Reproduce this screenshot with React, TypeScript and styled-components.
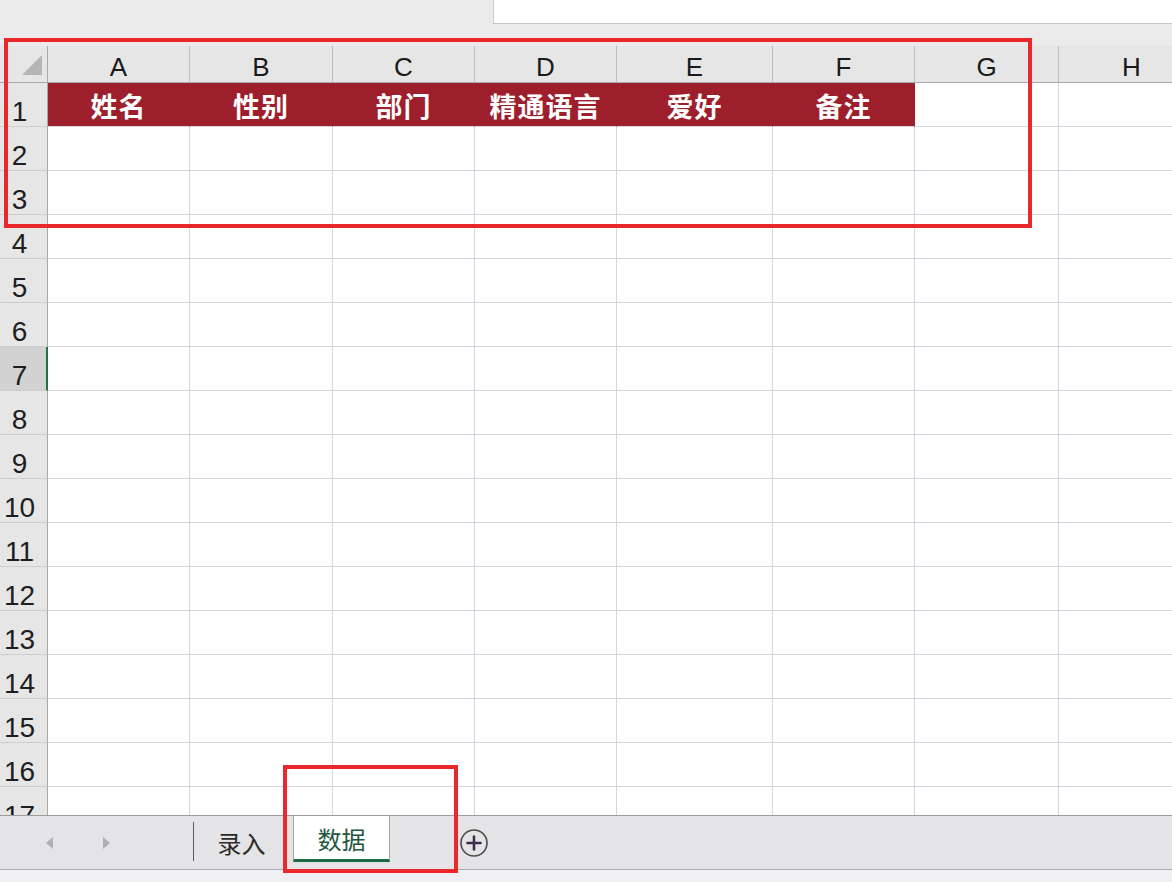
import React from "react";
import styled, { createGlobalStyle } from "styled-components";

const GlobalStyle = createGlobalStyle`
  html, body {
    margin: 0;
    padding: 0;
    background: #ebebeb;
  }
  body {
    font-family: "Liberation Sans", "Noto Sans CJK SC", sans-serif;
  }
`;

const letters = ["A", "B", "C", "D", "E", "F", "G", "H"];
const titles = ["姓名", "性别", "部门", "精通语言", "爱好", "备注"];
const rowCount = 17;
const activeRow = 7;

export default function App() {
  return (
    <>
      <GlobalStyle />
      <Page>
        <TopBar>
          <FormulaBox />
        </TopBar>

        <Sheet>
          <Corner>
            <svg width="20" height="20" viewBox="0 0 20 20">
              <polygon points="20,0 20,20 0,20" fill="#b5b5b5" />
            </svg>
          </Corner>
          {letters.map((l) => (
            <ColHead key={l}>{l}</ColHead>
          ))}

          {Array.from({ length: rowCount }, (_, i) => {
            const r = i + 1;
            return (
              <React.Fragment key={r}>
                <RowHead $active={r === activeRow}>{r}</RowHead>
                {letters.map((l, c) => {
                  const title = r === 1 ? titles[c] : undefined;
                  return (
                    <Cell key={l} $filled={!!title}>
                      {title}
                    </Cell>
                  );
                })}
              </React.Fragment>
            );
          })}
        </Sheet>

        <TabBar>
          <Nav>
            <Arrow viewBox="0 0 8 12">
              <polygon points="7,0 7,12 0,6" />
            </Arrow>
            <Arrow viewBox="0 0 8 12">
              <polygon points="1,0 1,12 8,6" />
            </Arrow>
          </Nav>
          <Divider />
          <Tab>录入</Tab>
          <Tab $active>数据</Tab>
          <AddButton aria-label="新工作表">
            <svg width="30" height="30" viewBox="0 0 30 30">
              <circle cx="15" cy="15" r="13" fill="none" stroke="#4a4a4a" strokeWidth="1.6" />
              <path d="M15 8.5 V21.5 M8.5 15 H21.5" stroke="#3b2f4d" strokeWidth="2.6" strokeLinecap="round" />
            </svg>
          </AddButton>
        </TabBar>

        <StatusBar />

        <Mark $x={4} $y={38} $w={1028} $h={190} />
        <Mark $x={283} $y={765} $w={175} $h={108} />
      </Page>
    </>
  );
}

const Page = styled.div`
  position: relative;
  width: 1172px;
  height: 882px;
  overflow: hidden;
  display: flex;
  flex-direction: column;
  background: #ebebeb;
`;

const TopBar = styled.div`
  height: 46px;
  flex-shrink: 0;
  display: flex;
  justify-content: flex-end;
  align-items: flex-start;
  background: #ebebeb;
`;

const FormulaBox = styled.div`
  width: 679px;
  height: 24px;
  box-sizing: border-box;
  background: #ffffff;
  border-left: 1px solid #cacaca;
  border-bottom: 1px solid #c4c4c4;
`;

const Sheet = styled.div`
  height: 769px;
  flex-shrink: 0;
  overflow: hidden;
  display: grid;
  grid-template-columns: 48px 142px 143px 142px 142px 156px 142px 144px 146px;
  grid-template-rows: 37px repeat(17, 44px);
  background: #ffffff;
`;

const Corner = styled.div`
  box-sizing: border-box;
  background: #e6e6e6;
  border-right: 1px solid #a8a8a8;
  border-bottom: 1px solid #a8a8a8;
  display: flex;
  justify-content: flex-end;
  align-items: flex-end;
  padding: 0 5px 7px 0;
`;

const ColHead = styled.div`
  box-sizing: border-box;
  background: #e6e6e6;
  border-right: 1px solid #bcbcbc;
  border-bottom: 1px solid #a8a8a8;
  display: flex;
  justify-content: center;
  align-items: flex-end;
  padding-bottom: 2px;
  font-size: 26px;
  line-height: 26px;
  color: #1a1a1a;
`;

const RowHead = styled.div<{ $active?: boolean }>`
  box-sizing: border-box;
  background: ${(p) => (p.$active ? "#d2d2d2" : "#e6e6e6")};
  border-right: ${(p) => (p.$active ? "2px solid #217346" : "1px solid #a8a8a8")};
  border-bottom: 1px solid #cdcdcd;
  display: flex;
  justify-content: center;
  align-items: flex-end;
  padding-right: ${(p) => (p.$active ? "7px" : "8px")};
  font-size: 28px;
  line-height: 28px;
  color: #1e1e1e;
`;

const Cell = styled.div<{ $filled?: boolean }>`
  box-sizing: border-box;
  background: ${(p) => (p.$filled ? "#9e1f2c" : "#ffffff")};
  border-right: 1px solid ${(p) => (p.$filled ? "#9e1f2c" : "#d5d5df")};
  border-bottom: 1px solid #d5d5df;
  display: flex;
  justify-content: center;
  align-items: center;
  color: #ffffff;
  font-family: "Noto Sans CJK SC", "Liberation Sans", sans-serif;
  font-weight: 700;
  font-size: 27px;
  letter-spacing: 1px;
  padding-top: 1px;
`;

const TabBar = styled.div`
  height: 55px;
  flex-shrink: 0;
  box-sizing: border-box;
  display: flex;
  align-items: stretch;
  background: #e4e4e6;
  border-top: 1px solid #9c9c9c;
  border-bottom: 1px solid #ababab;
`;

const Nav = styled.div`
  width: 193px;
  display: flex;
  align-items: center;
  gap: 48px;
  padding-left: 46px;
  box-sizing: border-box;
`;

const Arrow = styled.svg`
  width: 8px;
  height: 12px;
  fill: #b0b0b4;
`;

const Divider = styled.div`
  width: 1px;
  margin: 6px 0 8px;
  background: #5a5a5a;
`;

const Tab = styled.div<{ $active?: boolean }>`
  width: ${(p) => (p.$active ? "97px" : "99px")};
  box-sizing: border-box;
  display: flex;
  justify-content: center;
  align-items: center;
  font-family: "Noto Sans CJK SC", "Liberation Sans", sans-serif;
  font-size: 24px;
  color: ${(p) => (p.$active ? "#22563d" : "#2a2a2a")};
  background: ${(p) => (p.$active ? "#ffffff" : "transparent")};
  border-left: ${(p) => (p.$active ? "1px solid #a8a8a8" : "none")};
  border-right: ${(p) => (p.$active ? "1px solid #a8a8a8" : "none")};
  border-bottom: ${(p) => (p.$active ? "3px solid #1e6b43" : "none")};
  margin-bottom: ${(p) => (p.$active ? "7px" : "0")};
  padding: ${(p) => (p.$active ? "2px 0 0" : "0 4px 0 0")};
`;

const AddButton = styled.div`
  margin-left: 69px;
  display: flex;
  align-items: center;
`;

const StatusBar = styled.div`
  flex: 1;
  background: #f0f0f4;
`;

const Mark = styled.div<{ $x: number; $y: number; $w: number; $h: number }>`
  position: absolute;
  left: ${(p) => p.$x}px;
  top: ${(p) => p.$y}px;
  width: ${(p) => p.$w}px;
  height: ${(p) => p.$h}px;
  box-sizing: border-box;
  border: 4px solid #e8282b;
  pointer-events: none;
`;
